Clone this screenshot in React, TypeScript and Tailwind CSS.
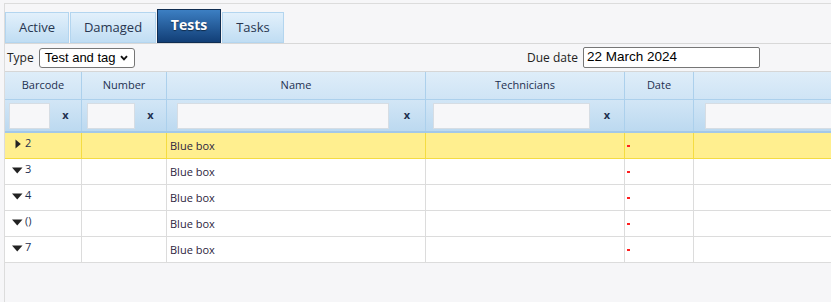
import React from "react";

const headerFont = { fontFamily: '"Open Sans", "Noto Sans", sans-serif' };

type Row = { n: string; open: boolean; selected?: boolean };

const rows: Row[] = [
  { n: "2", open: false, selected: true },
  { n: "3", open: true },
  { n: "4", open: true },
  { n: "()", open: true },
  { n: "7", open: true },
];

function Tab({ label, active, w }: { label: string; active?: boolean; w: string }) {
  if (active) {
    return (
      <div
        className={`${w} h-[34px] flex items-center justify-center pb-[4px] border border-[#0f2d52] bg-gradient-to-b from-[#3c7fc3] to-[#123f77] text-white font-bold text-[14px] [text-shadow:0_1px_1px_rgba(0,0,0,0.5)]`}
      >
        {label}
      </div>
    );
  }
  return (
    <div
      className={`${w} h-[31px] flex items-center justify-center border border-[#b3d5ef] bg-gradient-to-b from-[#e2f0fb] to-[#c0ddf3] text-[#283650] text-[13px]`}
    >
      {label}
    </div>
  );
}

function FilterInput({ ml, w }: { ml: string; w: string }) {
  return <div className={`${ml} ${w} h-[26px] shrink-0 bg-[#f7f7f9] border border-[#d6dde4]`} />;
}

function X() {
  return <div className="flex-1 flex items-center justify-center text-[11px] font-bold text-[#1e3050]">x</div>;
}

export default function App() {
  return (
    <div className="w-[831px] h-[302px] overflow-hidden bg-[#f6f6f8]" style={headerFont}>
      <div className="mt-[3px] ml-[4px] h-[299px] border-l border-t border-[#dcdcdc]">
        {/* Tabs */}
        <div className="h-[40px] flex items-end gap-[1px] border-b border-[#d8d8d8]">
          <Tab label="Active" w="w-[64px]" />
          <Tab label="Damaged" w="w-[86px]" />
          <Tab label="Tests" w="w-[64px]" active />
          <Tab label="Tasks" w="w-[62px]" />
        </div>

        {/* Type row */}
        <div className="h-[27px] flex items-center pl-[2px] pr-[71px] text-[12px] text-[#222]">
          <span>Type</span>
          <div
            className="ml-[5px] w-[96px] h-[20px] flex items-center justify-between pl-[5px] pr-[6px] border border-[#767676] rounded-[3px] bg-white text-[13px] text-black"
            style={{ fontFamily: '"Liberation Sans", Arial, sans-serif' }}
          >
            <span>Test and tag</span>
            <svg width="8" height="6" viewBox="0 0 8 6">
              <path d="M1 1.2 L4 4.4 L7 1.2" fill="none" stroke="#111" strokeWidth="1.9" />
            </svg>
          </div>
          <span className="ml-auto">Due date</span>
          <div
            className="ml-[5px] w-[177px] h-[21px] flex items-center pl-[3px] border border-[#767676] rounded-[2px] bg-white text-[13.5px] text-black"
            style={{ fontFamily: '"Liberation Sans", Arial, sans-serif' }}
          >
            22 March 2024
          </div>
        </div>

        {/* Table */}
        <div className="border-t border-[#d6d6d6] w-[900px]">
          {/* Header */}
          <div className="flex h-[28px] border-b border-[#acd0ec] bg-gradient-to-b from-[#deedf9] to-[#cfe4f5] text-[11px] text-[#1e3050]">
            <div className="w-[77px] border-r border-[#acd0ec] flex items-center justify-center">Barcode</div>
            <div className="w-[85px] border-r border-[#acd0ec] flex items-center justify-center">Number</div>
            <div className="w-[259px] border-r border-[#acd0ec] flex items-center justify-center">Name</div>
            <div className="w-[199px] border-r border-[#acd0ec] flex items-center justify-center">Technicians</div>
            <div className="w-[69px] border-r border-[#acd0ec] flex items-center justify-center">Date</div>
            <div className="w-[200px]" />
          </div>
          {/* Filter */}
          <div className="flex h-[33px] border-b-2 border-[#a3c8e9] bg-gradient-to-b from-[#d2e6f6] to-[#bcd9f0]">
            <div className="w-[77px] border-r border-[#acd0ec] flex items-center">
              <FilterInput ml="ml-[4px]" w="w-[41px]" />
              <X />
            </div>
            <div className="w-[85px] border-r border-[#acd0ec] flex items-center">
              <FilterInput ml="ml-[5px]" w="w-[48px]" />
              <X />
            </div>
            <div className="w-[259px] border-r border-[#acd0ec] flex items-center">
              <FilterInput ml="ml-[10px]" w="w-[212px]" />
              <X />
            </div>
            <div className="w-[199px] border-r border-[#acd0ec] flex items-center">
              <FilterInput ml="ml-[7px]" w="w-[157px]" />
              <X />
            </div>
            <div className="w-[69px] border-r border-[#acd0ec]" />
            <div className="w-[200px] flex items-center">
              <FilterInput ml="ml-[11px]" w="w-[180px]" />
            </div>
          </div>
          {/* Rows */}
          {rows.map((r, i) => {
            const bc = r.selected ? "border-[#f4dc42]" : "border-[#dcdcdc]";
            return (
              <div
                key={i}
                className={`flex h-[26px] border-b ${bc} ${r.selected ? "bg-[#ffef8f]" : "bg-white"} text-[11px]`}
              >
                <div className={`w-[77px] border-r ${bc} flex items-start pt-[4px] pl-[6px]`}>
                  <div className="w-[13px] h-[14px] flex items-center justify-center">
                    {r.open ? (
                      <svg width="11" height="7" viewBox="0 0 11 7">
                        <path d="M0 0.5 L10.5 0.5 L5.25 6.5 Z" fill="#222" />
                      </svg>
                    ) : (
                      <svg width="6" height="10" viewBox="0 0 6 10">
                        <path d="M0.5 0.5 L5.8 5 L0.5 9.5 Z" fill="#222" />
                      </svg>
                    )}
                  </div>
                  <span className="ml-[1px] leading-[12px] text-[#1e3050]">{r.n}</span>
                </div>
                <div className={`w-[85px] border-r ${bc}`} />
                <div className={`w-[259px] border-r ${bc} flex items-center pl-[3px] pt-[2px] text-[#2e2440]`}>
                  Blue box
                </div>
                <div className={`w-[199px] border-r ${bc}`} />
                <div className={`w-[69px] border-r ${bc} flex items-center pl-[2px]`}>
                  <div className="w-[3px] h-[2px] bg-[#ff2020]" />
                </div>
                <div className="w-[200px]" />
              </div>
            );
          })}
        </div>
      </div>
    </div>
  );
}
